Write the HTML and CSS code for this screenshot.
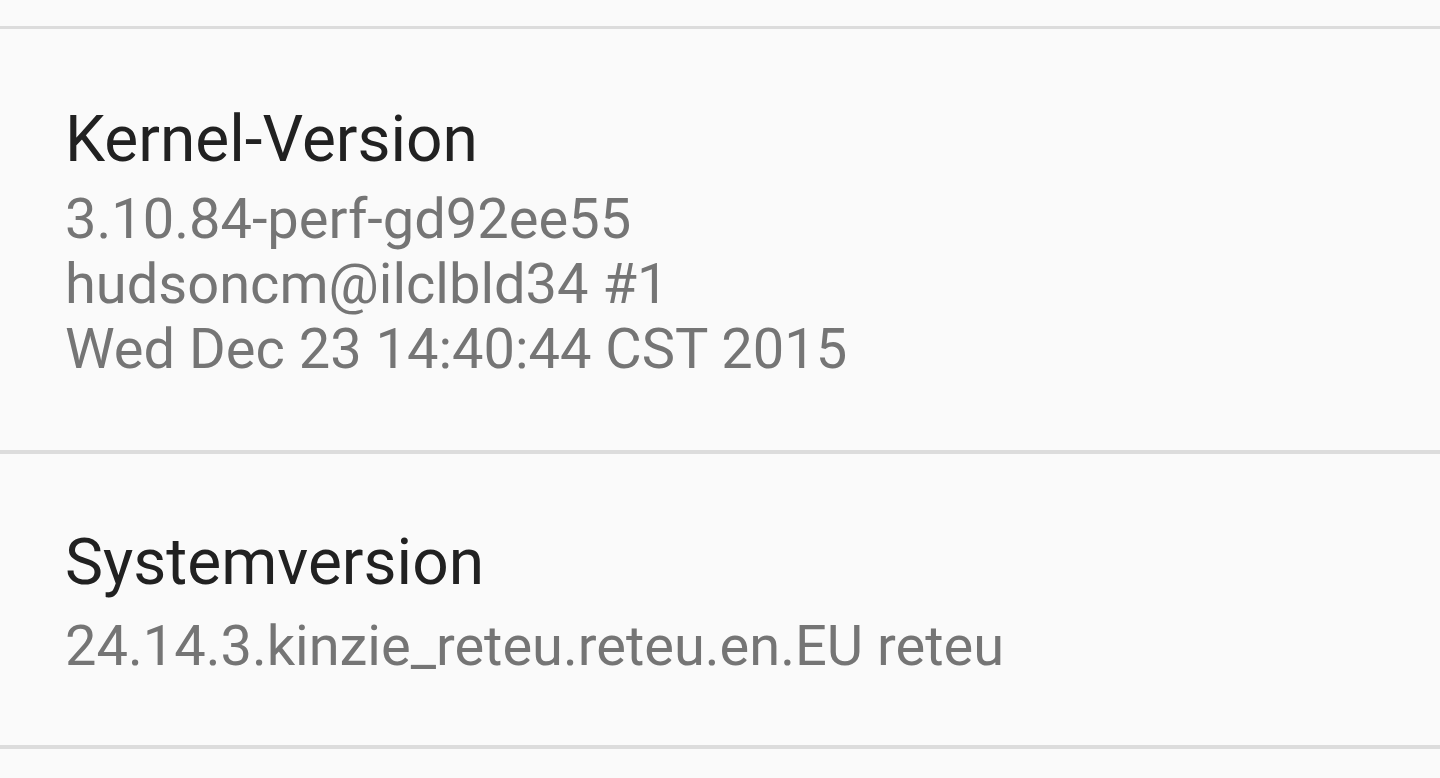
FILE: index.html
```html
<!DOCTYPE html>
<html lang="de">
<head>
<meta charset="utf-8">
<title>Telefoninfo</title>
<link rel="stylesheet" href="styles.css">
</head>
<body>
<div class="list">
  <div class="spacer"></div>
  <div class="item item-kernel">
    <div class="title">Kernel-Version</div>
    <div class="summary">
      <div class="line">3.10.84-perf-gd92ee55</div>
      <div class="line">hudsoncm@ilclbld34 #1</div>
      <div class="line">Wed Dec 23 14:40:44 CST 2015</div>
    </div>
  </div>
  <div class="item item-system">
    <div class="title">Systemversion</div>
    <div class="summary">
      <div class="line">24.14.3.kinzie_reteu.reteu.en.EU reteu</div>
    </div>
  </div>
  <div class="spacer-bottom"></div>
</div>
</body>
</html>
```

FILE: styles.css
```css
html, body {
  margin: 0;
  padding: 0;
  background: #fafafa;
  height: 100%;
  overflow: hidden;
}
body {
  font-family: Roboto, "Noto Sans", sans-serif;
  -webkit-font-smoothing: antialiased;
}
.list {
  display: flex;
  flex-direction: column;
}
.spacer {
  height: 26px;
  border-bottom: 3px solid #dcdcdc;
}
.item {
  display: flex;
  flex-direction: column;
  padding: 0 65px;
  border-bottom: 4px solid #dcdcdc;
}
.item-kernel {
  padding-top: 71px;
  padding-bottom: 68px;
  gap: 7px;
}
.item-system {
  padding-top: 69px;
  padding-bottom: 66px;
  gap: 11px;
}
.title {
  font-size: 64px;
  line-height: 80px;
  color: #212121;
  white-space: nowrap;
}
.summary {
  font-size: 56px;
  line-height: 65px;
  color: #757575;
}
.line {
  white-space: nowrap;
}
.spacer-bottom {
  height: 40px;
}
```
